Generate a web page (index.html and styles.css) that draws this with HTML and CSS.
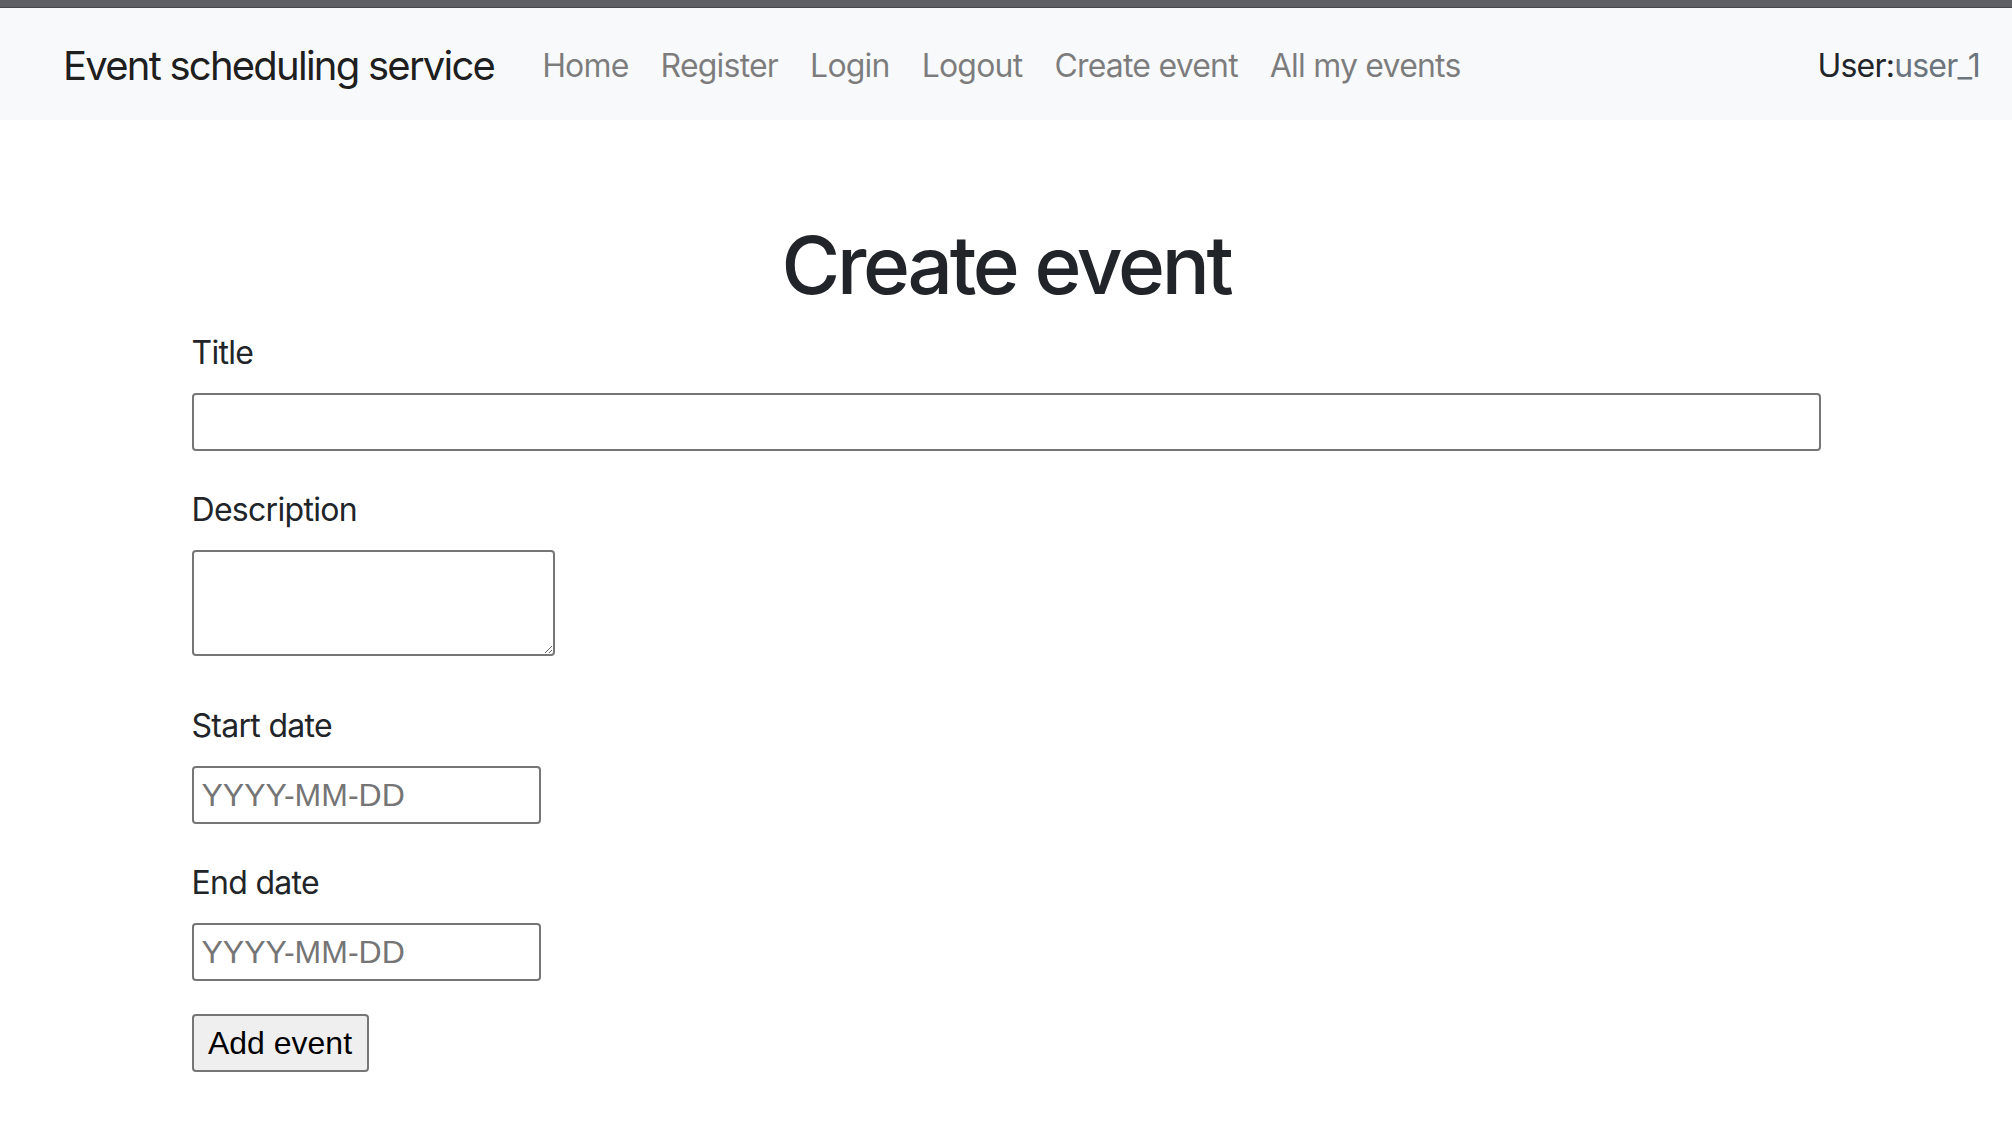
FILE: index.html
```html
<!DOCTYPE html>
<html>
  <head>
    <meta charset="utf-8">
    <title>Create event</title>
    <link rel="stylesheet" href="styles.css">
  </head>
  <body>
    <div class="topbar"></div>
    <nav class="navbar">
      <a class="brand" href="#">Event scheduling service</a>
      <ul class="nav-links">
        <li><a href="#">Home</a></li>
        <li><a href="#">Register</a></li>
        <li><a href="#">Login</a></li>
        <li><a href="#">Logout</a></li>
        <li><a href="#">Create event</a></li>
        <li><a href="#">All my events</a></li>
      </ul>
      <span class="user">User:<span class="user-name">user_1</span></span>
    </nav>
    <main class="container">
      <h1>Create event</h1>
      <form>
        <div class="form-group">
          <label for="title">Title</label>
          <input id="title" class="wide" type="text">
        </div>
        <div class="form-group">
          <label for="description">Description</label>
          <textarea id="description"></textarea>
        </div>
        <div class="form-group">
          <label for="start">Start date</label>
          <input id="start" class="date" type="text" placeholder="YYYY-MM-DD">
        </div>
        <div class="form-group">
          <label for="end">End date</label>
          <input id="end" class="date" type="text" placeholder="YYYY-MM-DD">
        </div>
        <button type="submit">Add event</button>
      </form>
    </main>
  </body>
</html>
```

FILE: styles.css
```css
* { box-sizing: border-box; }
body {
  margin: 0;
  font-family: Inter, "Liberation Sans", sans-serif;
  color: #212529;
  background: #fff;
}
a {
  text-decoration: none;
}
.topbar {
  height: 8px;
  background: #5e6065;
  border-bottom: 1px solid #45474b;
}
.navbar {
  display: flex;
  align-items: center;
  height: 112px;
  padding: 3px 32px 0 63px;
  background: #f8f9fa;
}
.brand {
  font-size: 40px;
  line-height: 60px;
  letter-spacing: -0.044em;
  color: rgba(0, 0, 0, 0.9);
  margin-right: 32px;
}
.nav-links {
  display: flex;
  list-style: none;
  margin: 0;
  padding: 0;
}
.nav-links a {
  display: block;
  padding: 0 16px;
  font-size: 32px;
  line-height: 48px;
  letter-spacing: -0.025em;
  color: rgba(0, 0, 0, 0.5);
}
.user {
  margin-left: auto;
  font-size: 32px;
  line-height: 48px;
  letter-spacing: -0.025em;
}
.user-name {
  color: #6c757d;
}
.container {
  width: 1629px;
  margin: 97px auto 0;
}
h1 {
  margin: 0 0 16px;
  font-size: 80px;
  font-weight: 500;
  line-height: 96px;
  letter-spacing: -0.041em;
  text-align: center;
}
.form-group {
  margin-bottom: 35px;
}
label {
  display: block;
  margin-bottom: 16px;
  font-size: 32px;
  line-height: 48px;
  letter-spacing: -0.022em;
}
input, textarea, button {
  display: block;
  margin: 0;
  font-family: "Liberation Sans", Arial, sans-serif;
  font-size: 32px;
  color: #000;
  border: 2px solid #767676;
  border-radius: 4px;
}
input {
  height: 58px;
  padding: 2px 8px;
}
input::placeholder {
  color: #757575;
}
input.wide {
  width: 100%;
}
input.date {
  width: 349px;
}
textarea {
  width: 363px;
  height: 106px;
  margin-bottom: 46px;
  padding: 4px;
}
button {
  width: 177px;
  height: 58px;
  margin-top: -2px;
  padding: 0 12px;
  background: #efefef;
}
```
